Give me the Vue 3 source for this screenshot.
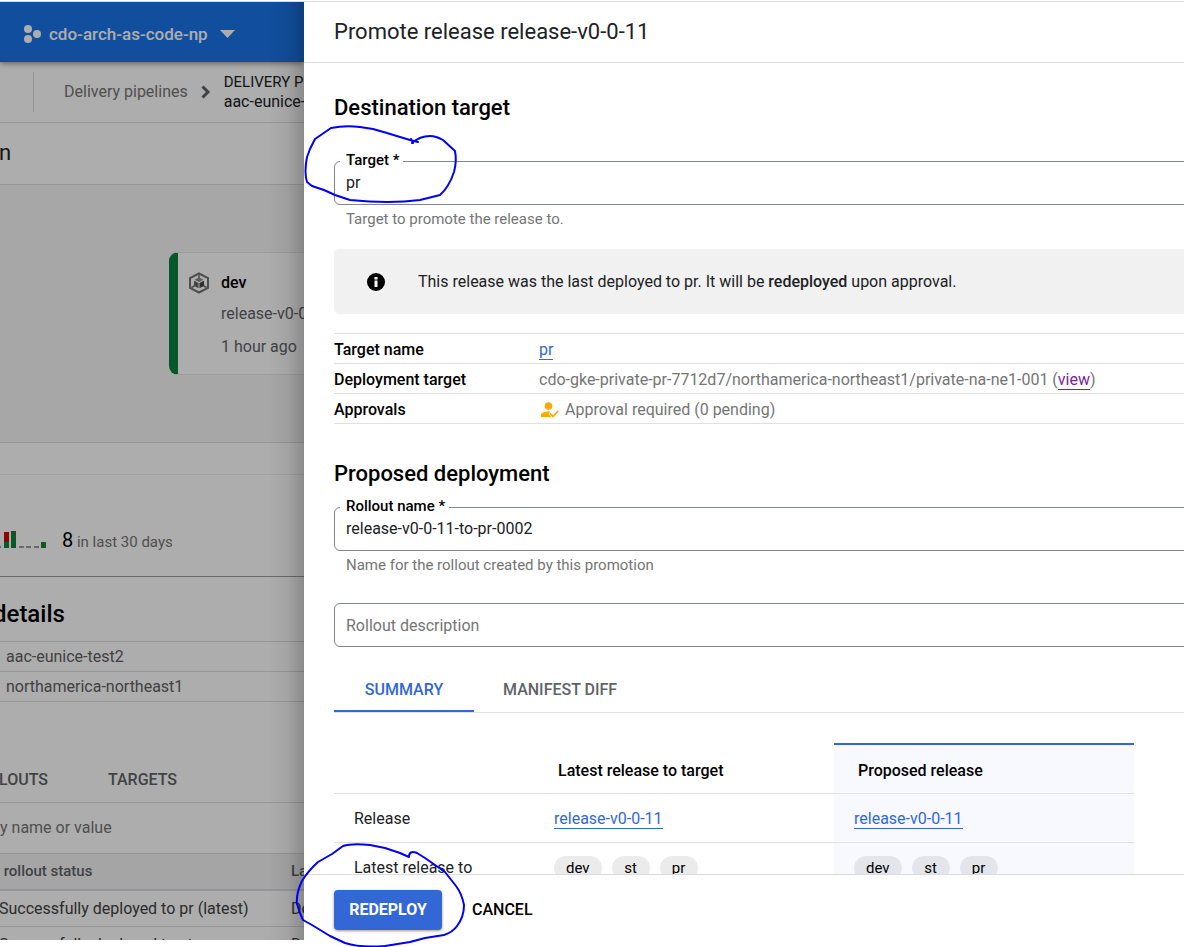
<script setup>
import { ref } from 'vue'

const target = ref('pr')
const rolloutName = ref('release-v0-0-11-to-pr-0002')
const description = ref('')
const stages = ['dev', 'st', 'pr']
</script>

<template>
  <div class="shell">
    <main class="page">
      <header class="topbar">
        <button class="project">
          <svg width="18" height="18" viewBox="0 0 18 18" fill="currentColor" aria-hidden="true">
            <circle cx="4" cy="4" r="4" /><circle cx="4" cy="14" r="4" /><circle cx="13" cy="9" r="4" />
          </svg>
          <span>cdo-arch-as-code-np</span>
          <svg class="caret" width="15" height="8" viewBox="0 0 15 8" fill="currentColor" aria-hidden="true"><path d="M0 0h15L7.500 8z" /></svg>
        </button>
      </header>

      <nav class="crumbs">
        <a href="#">Delivery pipelines</a>
        <svg width="10" height="14" viewBox="0 0 10 14" fill="none" stroke="#5f6368" stroke-width="3" aria-hidden="true"><path d="M1.500 1.500L7 7l-5.500 5.500" /></svg>
        <div class="current"><small>DELIVERY PIPELINE</small><span>aac-eunice-test2</span></div>
      </nav>

      <div class="titlebar">n</div>

      <section class="canvas">
        <article class="stage">
          <svg width="22" height="22" viewBox="0 0 22 22" aria-hidden="true">
            <path d="M11 1.500l9 4.700v9.600L11 20.500l-9-4.700V6.200z" fill="none" stroke="#757575" stroke-width="2" />
            <path d="M11 2v5M3.500 15.500L7 13.500M18.500 15.500L15 13.500" stroke="#757575" stroke-width="1.500" />
            <path d="M11 5.500l4.500 2.200L11 9.900 6.500 7.700z" fill="#8a8a8a" />
            <path d="M6 8.700l4.500 2.200v5.300L6 13.700z" fill="#666" />
            <path d="M16 8.700l-4.500 2.200v5.300l4.500-2.500z" fill="#444" />
          </svg>
          <div>
            <strong>dev</strong>
            <p>release-v0-0-11</p>
            <p>1 hour ago</p>
          </div>
        </article>
      </section>

      <section class="stats">
        <svg width="46" height="18" viewBox="0 0 46 18" aria-hidden="true">
          <path d="M0 17h1M19 17h5M26 17h5M34 17h5" stroke="#9a9a9a" stroke-width="2" />
          <path d="M4 2h5v10H4z" fill="#d50000" />
          <path d="M4 12h5v6H4zM11 1h5v17h-5zM41 12h5v6h-5z" fill="#188038" />
        </svg>
        <p><b>8</b> in last 30 days</p>
      </section>

      <section class="details">
        <h2>details</h2>
        <p>aac-eunice-test2</p>
        <p>northamerica-northeast1</p>
      </section>

      <nav class="page-tabs">
        <button>LOUTS</button>
        <button>TARGETS</button>
      </nav>
      <input class="filter" placeholder="y name or value" aria-label="Filter rollouts">
      <table class="rollouts">
        <thead><tr><th>t rollout status</th><th>Last rollout</th></tr></thead>
        <tbody>
          <tr><td>Successfully deployed to pr (latest)</td><td>Deployed</td></tr>
          <tr><td>Successfully deployed to st</td><td>Deployed</td></tr>
        </tbody>
      </table>
    </main>

    <aside class="drawer">
      <h1>Promote release release-v0-0-11</h1>
      <div class="content">
        <h2>Destination target</h2>
        <fieldset>
          <legend><label for="target">Target *</label></legend>
          <select id="target" v-model="target">
            <option>pr</option>
            <option>st</option>
            <option>dev</option>
          </select>
        </fieldset>
        <p class="hint">Target to promote the release to.</p>

        <div class="banner">
          <svg width="18" height="18" viewBox="0 0 18 18" aria-hidden="true">
            <circle cx="9" cy="9" r="9" fill="#000" />
            <path d="M7.500 4h3v2.500h-3zM7.500 7.500h3V14h-3z" fill="#fff" />
          </svg>
          <p>This release was the last deployed to pr. It will be <b>redeployed</b> upon approval.</p>
        </div>

        <table class="facts">
          <tbody>
            <tr><th scope="row">Target name</th><td><a href="#">pr</a></td></tr>
            <tr><th scope="row">Deployment target</th><td>cdo-gke-private-pr-7712d7/northamerica-northeast1/private-na-ne1-001 (<a href="#" class="visited">view</a>)</td></tr>
            <tr>
              <th scope="row">Approvals</th>
              <td>
                <div class="approval">
                  <svg width="18" height="16" viewBox="0 0 18 16" aria-hidden="true">
                    <circle cx="7.500" cy="4" r="3.800" fill="#f9ab00" />
                    <path d="M0 15v-2.200C0 10.500 4.500 9.500 7.500 9.500c.8 0 1.200.1 1.800.2L7.500 12l3 3z" fill="#f9ab00" />
                    <path d="M9 11.500l3 3 5.300-5.500" fill="none" stroke="#f9ab00" stroke-width="1.800" />
                  </svg>
                  Approval required (0 pending)
                </div>
              </td>
            </tr>
          </tbody>
        </table>

        <h2 class="second">Proposed deployment</h2>
        <fieldset class="close">
          <legend><label for="rollout">Rollout name *</label></legend>
          <input id="rollout" v-model="rolloutName">
        </fieldset>
        <p class="hint">Name for the rollout created by this promotion</p>
        <input v-model="description" class="description" placeholder="Rollout description" aria-label="Rollout description">

        <div class="tabs" role="tablist">
          <button role="tab" aria-selected="true" class="active">SUMMARY</button>
          <button role="tab" aria-selected="false">MANIFEST DIFF</button>
        </div>

        <table class="compare">
          <thead>
            <tr><th></th><th>Latest release to target</th><th class="proposed">Proposed release</th></tr>
          </thead>
          <tbody>
            <tr>
              <td>Release</td>
              <td><a href="#">release-v0-0-11</a></td>
              <td class="proposed"><a href="#">release-v0-0-11</a></td>
            </tr>
            <tr>
              <td>Latest release to</td>
              <td><div class="chips"><span v-for="s in stages" :key="s">{{ s }}</span></div></td>
              <td class="proposed"><div class="chips"><span v-for="s in stages" :key="s">{{ s }}</span></div></td>
            </tr>
          </tbody>
        </table>
      </div>
      <footer>
        <button class="primary">REDEPLOY</button>
        <button class="cancel">CANCEL</button>
      </footer>
    </aside>

    <svg class="ink" width="480" height="947" viewBox="0 0 480 947" fill="none" stroke="#0000fa" stroke-width="2" stroke-linejoin="round" stroke-linecap="round" aria-hidden="true">
      <path d="M418 142L410 140 400 137 387 133 373 129 360 127Q345 125 331 128L315 139 310 149 307 157Q304 172 307 182L312 186 324 190 335 195 350 200Q390 204 420 200L440 195Q449 187 454 172 457 161 455 151L443 140Q436 136 430 136 420 136 412 143M411 139l2 4" />
      <path d="M409 857L400 853 385 848 370 845Q352 843 343 846L332 854 318 862Q308 871 302 881 296 893 297 904L300 913 303 920 312 925 330 936 345 943Q360 948 385 946L410 942 425 938 444 935Q453 932 457 926 464 917 464 905 462 894 456 886L445 872 425 858 417 853Q409 850 409 857" />
    </svg>
  </div>
</template>

<style>
body { background: #fff; overflow: hidden; }
</style>

<style scoped>
* { box-sizing: border-box; }
.shell {
  display: grid;
  grid-template-columns: 304px minmax(0, 1fr);
  position: relative;
  height: 100vh;
  padding-top: 1px;
  overflow: hidden;
  font: 16px/20px Roboto, sans-serif;
  color: #202124;
}
h1, h2, p { margin: 0; font-weight: 400; }
button { border: 0; padding: 0; background: none; font: inherit; color: inherit; }
input, select { border: 0; padding: 0; background: none; font: inherit; color: inherit; outline: 0; }
table { border-collapse: separate; border-spacing: 0; }
th { font-weight: 500; text-align: left; }
th, td { padding: 0; }
svg { flex: none; }

.page {
  position: relative;
  margin-bottom: 7px;
  border-top: 1px solid #dadce0;
  overflow: hidden;
  white-space: nowrap;
}
.page::after {
  content: "";
  position: absolute;
  inset: 0;
  background: linear-gradient(to left, rgba(0, 0, 0, .2), rgba(0, 0, 0, .06) 16px, transparent 36px), rgba(0, 0, 0, .32);
  pointer-events: none;
}
.topbar {
  display: flex;
  align-items: center;
  height: 60px;
  padding: 3px 0 0 24px;
  background: #1a73e8;
  box-shadow: 0 1px 6px rgba(0, 0, 0, .5);
  color: #fff;
}
.project { display: flex; align-items: center; gap: 7px; font-size: 17px; font-weight: 500; }
.caret { margin-left: 5px; }
.crumbs {
  display: flex;
  align-items: center;
  gap: 13px;
  height: 61px;
  border-bottom: 1px solid #dadce0;
}
.crumbs a {
  margin-left: 33px;
  padding: 10px 0 10px 30px;
  border-bottom: 0;
  border-left: 1px solid #dadce0;
  color: #757575;
}
.crumbs .current { display: grid; }
.crumbs small { font-size: 15px; }
.titlebar { height: 62px; margin-left: -1px; border-bottom: 1px solid #dadce0; font-size: 22px; line-height: 59px; }
.canvas {
  height: 258px;
  padding: 67px 0 0 169px;
  border-bottom: 1px solid #dadce0;
  background: #f6f6f6;
}
.stage {
  display: flex;
  gap: 11px;
  width: 300px;
  height: 123px;
  padding: 19px 0 0 10px;
  border: 1px solid #e8e8e8;
  border-left: 9px solid #0b8043;
  border-radius: 9px;
  background: #fff;
  color: #5f6368;
}
.stage strong { display: block; padding-top: 1px; font-weight: 500; color: #000; }
.stage p { margin-top: 11px; }
.stage p:last-child { margin-top: 13px; }
.stats {
  display: flex;
  align-items: flex-end;
  gap: 16px;
  height: 134px;
  padding-bottom: 28px;
  border-bottom: 1px solid #9aa09c;
  background: linear-gradient(#eee, #eee) 0 31px / 100% 1px no-repeat;
  color: #757575;
}
.stats p { margin-bottom: -6px; font-size: 15px; line-height: 24px; }
.stats b { font-size: 20px; font-weight: 400; color: #000; }
.details h2 {
  height: 64px;
  margin-left: -7px;
  padding-top: 21px;
  font-size: 24px;
  font-weight: 500;
  line-height: 32px;
  color: #000;
}
.details p { height: 30px; padding-left: 6px; border-top: 1px solid #dadce0; line-height: 30px; color: #616161; }
.details p:last-child { height: 31px; border-bottom: 1px solid #dadce0; }
.page-tabs {
  display: flex;
  gap: 60px;
  height: 101px;
  margin-left: -1px;
  padding-top: 55px;
  border-bottom: 1px solid #dadce0;
  font-weight: 500;
  color: #5f6368;
}
.filter { display: block; width: 100%; height: 50px; padding-bottom: 2px; }
.filter::placeholder { color: #757575; opacity: 1; }
.rollouts { margin-left: -1px; color: #424242; }
.rollouts th {
  height: 38px;
  padding-bottom: 2px;
  border-top: 1px solid #dadce0;
  border-bottom: 2px solid #dadce0;
  background: #f4f4f4;
  font-size: 15px;
  color: #5f6368;
}
.rollouts th:first-child { min-width: 292px; }
.rollouts thead th:first-child { text-indent: -4px; }
.rollouts td { height: 36px; border-bottom: 1px solid #dadce0; }

.drawer { display: flex; flex-direction: column; min-height: 0; border-top: 1px solid #dadce0; background: #fff; }
.drawer h1 {
  flex: none;
  height: 61px;
  padding-left: 30px;
  border-bottom: 1px solid #dadce0;
  font-size: 22px;
  line-height: 60px;
}
.content { flex: 1; min-height: 0; padding: 29px 0 0 30px; overflow: hidden; }
h2 { font-size: 22px; line-height: 32px; }
.drawer h2 { font-weight: 500; color: #000; }
h2.second { margin-top: 34px; }
fieldset {
  height: 52px;
  margin: 29px -8px 0 0;
  padding: 0;
  border: 1px solid #80868b;
  border-radius: 6px;
}
fieldset.close { margin-top: 9px; }
legend {
  margin-left: 5px;
  padding: 0 4px 2px 6px;
  font-size: 15px;
  font-weight: 500;
  line-height: 14px;
  color: #000;
}
fieldset input, fieldset select { display: block; width: 100%; height: 26px; padding-left: 11px; appearance: none; }
fieldset select { padding-top: 1px; }
.hint { padding: 4px 0 0 12px; font-size: 15px; color: #757575; }
.banner {
  display: flex;
  align-items: center;
  gap: 33px;
  height: 65px;
  margin: 20px -8px 0 0;
  padding-left: 33px;
  border-radius: 5px;
  background: #f1f1f1;
}
b { font-weight: 500; }
a { color: #3367d6; text-decoration: none; border-bottom: 1px solid currentColor; }
a.visited { color: #7b1fa2; }
.facts { width: 100%; margin-top: 19px; border-top: 1px solid #e0e0e0; color: #757575; }
.facts th { width: 205px; color: #000; }
.facts th, .facts td { height: 30px; padding-top: 2px; border-bottom: 1px solid #e0e0e0; }
.approval { display: flex; align-items: center; gap: 6px; padding-left: 2px; }
.description {
  display: block;
  width: calc(100% + 8px);
  height: 44px;
  margin-top: 28px;
  padding-left: 11px;
  border: 1px solid #80868b;
  border-radius: 6px;
}
.description::placeholder { color: #757575; opacity: 1; }
.tabs { display: flex; height: 46px; margin-top: 20px; border-bottom: 1px solid #e0e0e0; color: #5f6368; font-weight: 500; }
.tabs button { min-width: 140px; height: 45px; padding: 2px 29px 0; border-bottom: 2px solid transparent; }
.tabs .active { border-color: #3367d6; color: #3367d6; }
.compare { table-layout: fixed; width: 800px; max-width: 100%; margin-top: 30px; }
.compare th { height: 51px; padding: 4px 0 0 24px; border-top: 2px solid transparent; border-bottom: 1px solid #e0e0e0; color: #000; }
.compare th:first-child { width: 200px; }
.compare th.proposed { border-top-color: #3367d6; }
.compare td { height: 49px; padding: 2px 0 0 20px; border-bottom: 1px solid #e0e0e0; }
.proposed { background: #f7f9fe; }
.chips { display: flex; gap: 10px; }
.chips span { min-width: 38px; padding: 0 12px; border-radius: 12px; background: rgba(0, 0, 0, .08); font-size: 15px; line-height: 24px; text-align: center; color: #000; }
footer {
  flex: none;
  display: flex;
  align-items: center;
  gap: 30px;
  height: 73px;
  padding: 0 0 2px 30px;
  border-top: 1px solid #dadce0;
  font-weight: 500;
  color: #000;
}
.primary {
  min-width: 108px;
  height: 40px;
  border-radius: 4px;
  background: #3367d6;
  box-shadow: 0 1px 3px rgba(0, 0, 0, .4);
  font-weight: 700;
  color: #fff;
}
.ink { position: absolute; top: 0; left: 0; pointer-events: none; }
</style>
